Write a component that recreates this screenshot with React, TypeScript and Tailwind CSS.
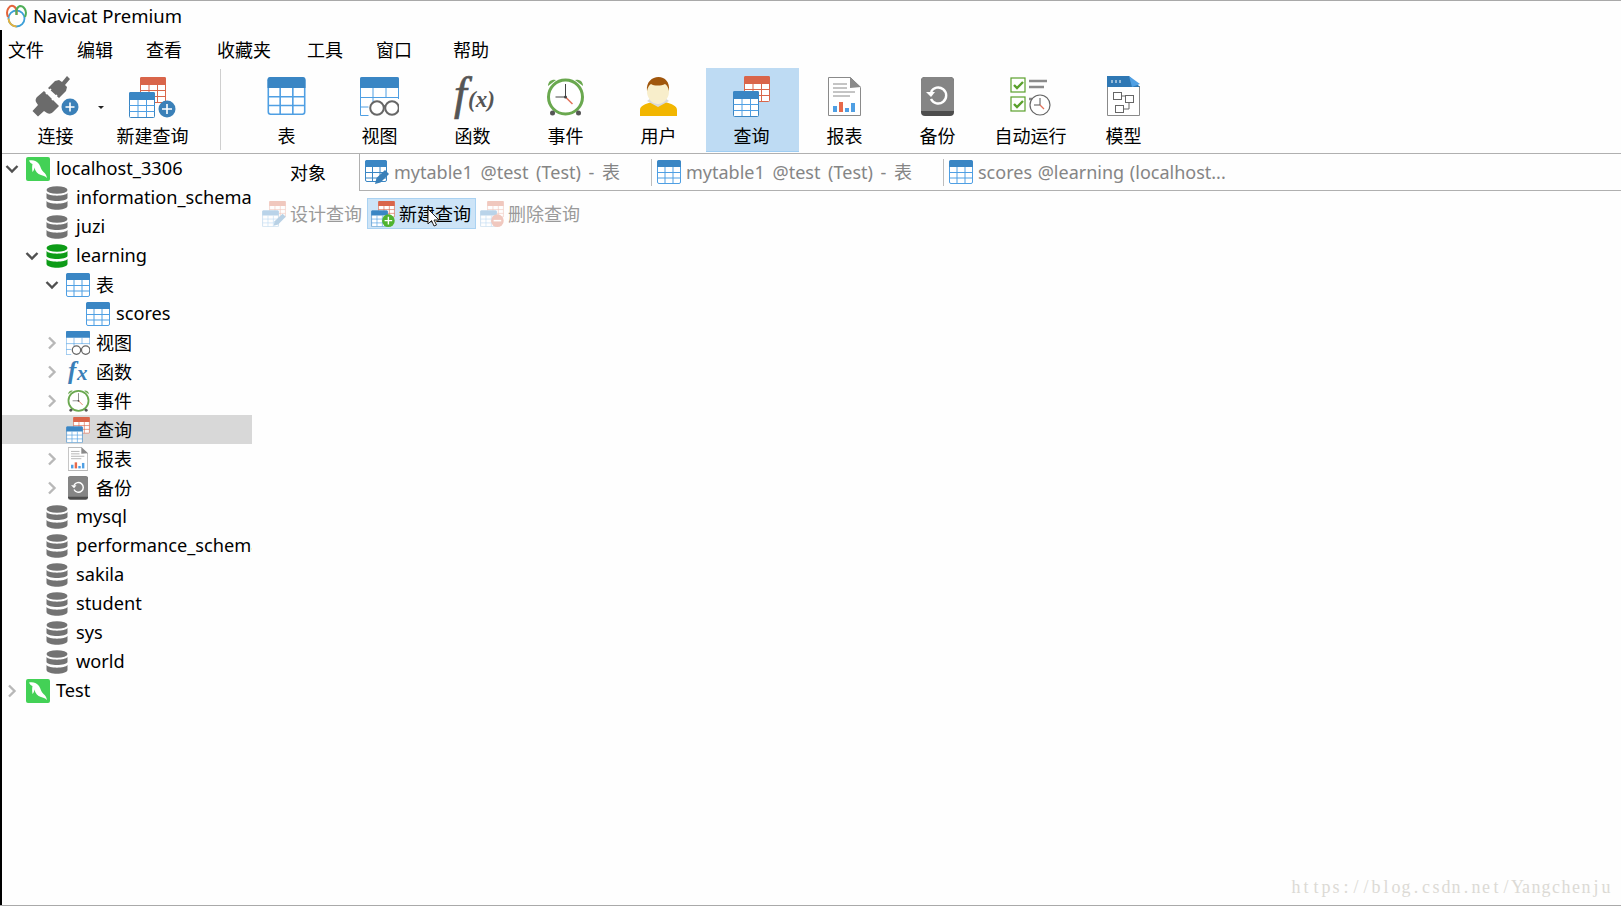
import React from 'react';

const cjk = "font-['Noto_Sans_CJK_SC','Noto_Sans',sans-serif]";
const latin = "font-['Noto_Sans','Noto_Sans_CJK_SC',sans-serif]";

function TableIcon({ w = 24, h = 24, head = '#3a86c4', line = '#4f9fe3' }: { w?: number; h?: number; head?: string; line?: string }) {
  return (
    <svg width={w} height={h} viewBox="0 0 24 24" className="shrink-0">
      <rect x="0.5" y="0.5" width="23" height="23" rx="1.5" fill="#fff" stroke={line} />
      <path d="M0 7V2a2 2 0 0 1 2-2h20a2 2 0 0 1 2 2v5z" fill={head} />
      <path d="M0.5 12.5h23M0.5 18h23M8 7v16.5M16 7v16.5" stroke={line} strokeWidth="1" fill="none" />
    </svg>
  );
}

function QueryTables() {
  return (
    <>
      <g>
        <rect x="11.5" y="0.5" width="25" height="25" rx="1" fill="#fff" stroke="#d9674b" />
        <path d="M11 8V1.5A1.5 1.5 0 0 1 12.5 0h23A1.5 1.5 0 0 1 37 1.5V8z" fill="#d9654a" />
        <path d="M11.5 13.5h25M11.5 19.5h25M20 8v17M28.5 8v17" stroke="#d9674b" fill="none" />
      </g>
      <g>
        <rect x="0.5" y="15.5" width="25" height="25" rx="1" fill="#fff" stroke="#3a86c4" />
        <path d="M0 23v-6.5A1.5 1.5 0 0 1 1.5 15h23a1.5 1.5 0 0 1 1.5 1.5V23z" fill="#3a86c4" />
        <path d="M0.5 28.5h25M0.5 34.5h25M9 23v17M17.5 23v17" stroke="#4f9fe3" fill="none" />
      </g>
    </>
  );
}

function QueryIcon({ w = 37, h = 41, plus, minus, pencil }: { w?: number; h?: number; plus?: boolean; minus?: boolean; pencil?: boolean }) {
  return (
    <svg width={w} height={h} viewBox="0 0 37 41" className="shrink-0">
      <QueryTables />
      {plus && (
        <g>
          <circle cx="27" cy="31" r="10" fill="#4fb32f" />
          <path d="M27 25v12M21 31h12" stroke="#fff" strokeWidth="2.200" />
        </g>
      )}
      {minus && (
        <g>
          <circle cx="27" cy="31" r="10" fill="#d9674b" />
          <path d="M21 31h12" stroke="#fff" strokeWidth="2.400" />
        </g>
      )}
      {pencil && <path d="M18 39l1.500-7L32 20l5 5-12 12z" fill="#3a80b8" />}
    </svg>
  );
}

function NewQueryIcon() {
  return (
    <svg width="47" height="41" viewBox="0 0 47 41" className="shrink-0">
      <QueryTables />
      <circle cx="38" cy="32" r="8.500" fill="#3a80b8" />
      <path d="M38 27v10M33 32h10" stroke="#fff" strokeWidth="1.600" />
    </svg>
  );
}

function PlugIcon() {
  return (
    <svg width="48" height="44" viewBox="0 0 48 44" className="shrink-0">
      <path d="M0.5 37l5.500-6-2-3c-1-2 0-4 1-5l7-6 15 15-6 6c-2 2-4 2-6 1l-3-2-6 5.500z" fill="#6b6b6b" />
      <path d="M16 14l7-7 4-1 3 2 5-6 3 3-5 6 2 2-1 4-7 7z" fill="#6b6b6b" />
      <path d="M14 20l5-5M20 26l5-5" stroke="#fff" strokeWidth="1.600" />
      <circle cx="38" cy="33" r="8.500" fill="#3a80b8" />
      <path d="M38 28.500v9M33.500 33h9" stroke="#fff" strokeWidth="1.600" />
    </svg>
  );
}

function ViewIcon({ w = 39, h = 39 }: { w?: number; h?: number }) {
  return (
    <svg width={w} height={h} viewBox="0 0 39 39" className="shrink-0">
      <path d="M0.5 38.500V1.500a1 1 0 0 1 1-1h36a1 1 0 0 1 1 1V22M0.500 38.500h8" fill="#fff" stroke="#4f9fe3" />
      <path d="M0 11V2a2 2 0 0 1 2-2h35a2 2 0 0 1 2 2v9z" fill="#3a86c4" />
      <path d="M0.5 20.500h38M0.500 30h8M13 11v14M26 11v10" stroke="#4f9fe3" fill="none" />
      <circle cx="17" cy="31" r="6.800" fill="#fff" stroke="#666" strokeWidth="2" />
      <circle cx="32" cy="31" r="6.800" fill="#fff" stroke="#666" strokeWidth="2" />
      <path d="M24 30c1-1 0.500-1 1-1" stroke="#666" strokeWidth="2" fill="none" />
    </svg>
  );
}

function ClockIcon({ size = 39, ring = '#6aa84f' }: { size?: number; ring?: string }) {
  return (
    <svg width={size} height={size} viewBox="0 0 39 39" className="shrink-0">
      <path d="M2 9a6 6 0 0 1 8-6zM37 9a6 6 0 0 0-8-6z" fill={ring} />
      <circle cx="19.500" cy="20" r="17" fill="#fff" stroke={ring} strokeWidth="3" />
      <circle cx="6.500" cy="36" r="2.500" fill="#555" />
      <circle cx="32.500" cy="36" r="2.500" fill="#555" />
      <path d="M19.500 7v13M9.500 20h10" stroke="#444" strokeWidth="1" fill="none" />
      <path d="M19.500 20l7 7" stroke="#e2725b" strokeWidth="1.500" fill="none" />
      <circle cx="19.500" cy="20" r="1.500" fill="#444" />
    </svg>
  );
}

function UserIcon() {
  return (
    <svg width="37" height="39" viewBox="0 0 37 39" className="shrink-0">
      <path d="M0 39v-6c0-4 5-6 12-8l6 3 7-3c7 2 12 4 12 8v6z" fill="#f2b600" />
      <path d="M7 24l4-3 7 6 7-6 4 3-11 6z" fill="#d9d9d9" />
      <ellipse cx="18" cy="14" rx="11" ry="13" fill="#f8eecb" />
      <path d="M7 14C6 5 12 0 18.500 0S30 5 29 14c-1-4-2-6-4-7-4 2-11 2-14 0-2 1-3 3-4 7z" fill="#a0560c" />
    </svg>
  );
}

function ReportIcon({ w = 33, h = 39 }: { w?: number; h?: number }) {
  return (
    <svg width={w} height={h} viewBox="0 0 33 39" className="shrink-0">
      <path d="M0.500 0.500h22l10 10v28h-32z" fill="#fff" stroke="#8a8a8a" />
      <path d="M22 0l11 10-11 1z" fill="#8a8a8a" />
      <path d="M5 7h14M5 11h14M5 15h22M5 19h17" stroke="#8a8a8a" strokeWidth="1" />
      <rect x="5" y="29" width="4" height="6" fill="#4f9fe3" />
      <rect x="11" y="25" width="4" height="10" fill="#e8694a" />
      <rect x="17" y="31" width="4" height="4" fill="#4f9fe3" />
      <rect x="23" y="26" width="4" height="9" fill="#4f9fe3" />
    </svg>
  );
}

function BackupIcon({ w = 33, h = 39 }: { w?: number; h?: number }) {
  return (
    <svg width={w} height={h} viewBox="0 0 33 39" className="shrink-0">
      <rect width="33" height="39" rx="4" fill="#4d4d4d" />
      <path d="M0 4a4 4 0 0 1 4-4h25a4 4 0 0 1 4 4v30H0z" fill="#858585" />
      <path d="M10 15a8 8 0 1 1 0 7" fill="none" stroke="#fff" strokeWidth="2.400" />
      <path d="M5 15h9l-4 5z" fill="#fff" />
    </svg>
  );
}

function AutoRunIcon() {
  return (
    <svg width="41" height="39" viewBox="0 0 41 39" className="shrink-0">
      <rect x="1" y="1" width="14" height="14" fill="#fff" stroke="#5aa02c" strokeWidth="1.200" />
      <rect x="1" y="20" width="14" height="14" fill="#fff" stroke="#5aa02c" strokeWidth="1.200" />
      <path d="M4 8l3 3 6-6M4 27l3 3 6-6" stroke="#5aa02c" strokeWidth="2.400" fill="none" />
      <path d="M19 4h18M19 10h15M19 22h3" stroke="#8a8a8a" strokeWidth="2.400" />
      <circle cx="30" cy="28" r="10" fill="#fff" stroke="#666" strokeWidth="1.200" />
      <path d="M30 21v7M24 28h6" stroke="#555" fill="none" />
      <path d="M30 28l4 4" stroke="#e2725b" strokeWidth="1.200" />
    </svg>
  );
}

function ModelIcon() {
  return (
    <svg width="33" height="40" viewBox="0 0 33 40" className="shrink-0">
      <path d="M0.500 10v29.500h32V10" fill="#fff" stroke="#8a8a8a" />
      <path d="M0 11V0h22l11 11z" fill="#2f78b4" />
      <path d="M22 0l11 8-8 3z" fill="#4f9fe3" />
      <path d="M5 4v3M9 4v3M13 4v3" stroke="#fff" />
      <g fill="#fff" stroke="#666" strokeWidth="1">
        <rect x="6.500" y="16.500" width="8" height="7" />
        <rect x="18.500" y="19.500" width="8" height="7" />
        <rect x="8.500" y="29.500" width="8" height="7" />
      </g>
      <path d="M14.500 20h4M22 26.500V33h-5.500" stroke="#666" fill="none" />
    </svg>
  );
}

function FxToolbar() {
  return (
    <svg width="56" height="48" viewBox="0 0 56 48" className="shrink-0 overflow-visible">
      <text x="9" y="37" fontFamily="Liberation Serif" fontStyle="italic" fontSize="46" stroke="#555" strokeWidth="0.700" fill="#555">f</text>
      <text x="23" y="35" fontFamily="Liberation Serif" fontStyle="italic" fontWeight="700" fontSize="23" fill="#555">(x)</text>
    </svg>
  );
}

function FxTree() {
  return (
    <svg width="26" height="26" viewBox="0 0 26 26" className="shrink-0 overflow-visible">
      <text x="3" y="20" fontFamily="Liberation Serif" fontStyle="italic" fontWeight="700" fontSize="25" fill="#3a7fb8">f</text>
      <text x="12" y="21" fontFamily="Liberation Serif" fontStyle="italic" fontWeight="700" fontSize="21" fill="#3a7fb8">x</text>
    </svg>
  );
}

function NavicatLogo() {
  return (
    <svg width="23" height="24" viewBox="0 0 23 24" className="shrink-0">
      <circle cx="11.500" cy="14.500" r="8" fill="none" stroke="#3c9fd8" strokeWidth="1.800" />
      <path d="M3.500 14.500a8 8 0 0 0 8 8" fill="none" stroke="#e8b23a" strokeWidth="1.800" />
      <path d="M3 13C0 6 5 1 8 2c3 1 4 5 3.500 9" fill="none" stroke="#e4643a" strokeWidth="2" />
      <path d="M20 13c3-7-2-11-5-11-3 1-4 5-3.500 9" fill="none" stroke="#4fae58" strokeWidth="2" />
    </svg>
  );
}

function Dolphin() {
  return (
    <svg width="24" height="24" viewBox="0 0 24 24" className="shrink-0">
      <rect width="24" height="24" rx="2" fill="#43d156" />
      <path d="M3 3.500C7 2.500 11 4 13 7c2 3 2 6 4.500 8 1.500 1 3 3 3.500 6-2-2-4-2.500-6-3-3.500-1-6-4-6.500-7.500-.3 2-1 3.500-2 4.500C6 12 6 9 6.500 7 5 6.500 3.500 5 3 3.500z" fill="#fff" />
    </svg>
  );
}

function DbIcon({ color = '#737373' }: { color?: string }) {
  return (
    <svg width="24" height="24" viewBox="0 0 24 24" className="shrink-0">
      <ellipse cx="11" cy="4" rx="10.500" ry="3.800" fill={color} />
      <path d="M0.500 7c2 3.500 19 3.500 21 0v5c-1 4-20 4-21 0z" fill={color} />
      <path d="M0.500 15c2 3.500 19 3.500 21 0v5c-1 5-20 5-21 0z" fill={color} />
    </svg>
  );
}

function Chevron({ open }: { open: boolean }) {
  if (open) {
    return (
      <svg width="14" height="10" viewBox="0 0 14 10">
        <path d="M1.500 2l5.500 5.500L12.500 2" fill="none" stroke="#505050" strokeWidth="2.400" />
      </svg>
    );
  }
  return (
    <svg width="10" height="14" viewBox="0 0 10 14">
      <path d="M2 1.500L7.500 7 2 12.500" fill="none" stroke="#b8b8b8" strokeWidth="2.400" />
    </svg>
  );
}

function QueryTabIcon() {
  return (
    <svg width="24" height="24" viewBox="0 0 24 24" className="shrink-0">
      <rect x="0.5" y="0.5" width="21" height="21" rx="1.500" fill="#fff" stroke="#3a86c4" />
      <path d="M0 7V2a2 2 0 0 1 2-2h18a2 2 0 0 1 2 2v5z" fill="#3a86c4" />
      <path d="M0.500 12.500h21M0.500 18h21M7.500 7v14M15 7v14" stroke="#3a86c4" fill="none" />
      <path d="M10 24l1.500-6L20 10l4 4-8.500 8.500z" fill="#3a80b8" />
    </svg>
  );
}

type TreeRow = { level: number; label: string; icon: React.ReactNode; open?: boolean; selected?: boolean; zh?: boolean };

const treeRows: TreeRow[] = [
  { level: 0, label: 'localhost_3306', icon: <Dolphin />, open: true },
  { level: 1, label: 'information_schema', icon: <DbIcon /> },
  { level: 1, label: 'juzi', icon: <DbIcon /> },
  { level: 1, label: 'learning', icon: <DbIcon color="#0d9c17" />, open: true },
  { level: 2, label: '表', icon: <TableIcon />, open: true, zh: true },
  { level: 3, label: 'scores', icon: <TableIcon /> },
  { level: 2, label: '视图', icon: <ViewIcon w={24} h={24} />, open: false, zh: true },
  { level: 2, label: '函数', icon: <FxTree />, open: false, zh: true },
  { level: 2, label: '事件', icon: <ClockIcon size={23} />, open: false, zh: true },
  { level: 2, label: '查询', icon: <QueryIcon w={24} h={26} />, selected: true, zh: true },
  { level: 2, label: '报表', icon: <ReportIcon w={20} h={24} />, open: false, zh: true },
  { level: 2, label: '备份', icon: <BackupIcon w={20} h={24} />, open: false, zh: true },
  { level: 1, label: 'mysql', icon: <DbIcon /> },
  { level: 1, label: 'performance_schema', icon: <DbIcon /> },
  { level: 1, label: 'sakila', icon: <DbIcon /> },
  { level: 1, label: 'student', icon: <DbIcon /> },
  { level: 1, label: 'sys', icon: <DbIcon /> },
  { level: 1, label: 'world', icon: <DbIcon /> },
  { level: 0, label: 'Test', icon: <Dolphin />, open: false },
];

const menus = [
  { label: '文件', width: 'w-[69px]' },
  { label: '编辑', width: 'w-[69px]' },
  { label: '查看', width: 'w-[71px]' },
  { label: '收藏夹', width: 'w-[90px]' },
  { label: '工具', width: 'w-[69px]' },
  { label: '窗口', width: 'w-[77px]' },
  { label: '帮助', width: 'w-[69px]' },
];

const tools: { label: string; icon: React.ReactNode; active?: boolean }[] = [
  { label: '表', icon: <TableIcon w={39} h={38} /> },
  { label: '视图', icon: <ViewIcon /> },
  { label: '函数', icon: <FxToolbar /> },
  { label: '事件', icon: <ClockIcon /> },
  { label: '用户', icon: <UserIcon /> },
  { label: '查询', icon: <QueryIcon />, active: true },
  { label: '报表', icon: <ReportIcon /> },
  { label: '备份', icon: <BackupIcon /> },
  { label: '自动运行', icon: <AutoRunIcon /> },
  { label: '模型', icon: <ModelIcon /> },
];

function ToolButton({ label, icon, active, width = 'w-[93px]', inset = 'pr-[2px]' }: { label: string; icon: React.ReactNode; active?: boolean; width?: string; inset?: string }) {
  return (
    <div className={`${width} ${inset} h-[84px] flex flex-col items-center shrink-0 ${active ? 'bg-[#bedbf3] border-b border-[#9fcdf2]' : ''}`}>
      <div className="mt-[6px] h-[44px] flex items-center justify-center">{icon}</div>
      <div className={`${cjk} mt-[3px] h-[28px] leading-[28px] text-[18px] text-black`}>{label}</div>
    </div>
  );
}

function Tab({ label, icon, last }: { label: string; icon: React.ReactNode; last?: boolean }) {
  return (
    <div className={`h-full flex items-center gap-[5px] pl-[5px] shrink-0 ${last ? '[word-spacing:1px]' : 'w-[291px] [word-spacing:3px]'}`}>
      {icon}
      <span className={`${latin} text-[18px] text-[#858585] whitespace-nowrap`}>{label}</span>
    </div>
  );
}

function ActionButton({ label, icon, hover, children }: { label: string; icon: React.ReactNode; hover?: boolean; children?: React.ReactNode }) {
  return (
    <div className={`relative w-[109px] h-[31px] flex items-center gap-[4px] pl-[3px] border ${hover ? 'bg-[#cde4f7] border-[#aad2f2] text-black' : 'border-transparent text-[#9a9a9a]'}`}>
      {icon}
      <span className={`${cjk} text-[18px] whitespace-nowrap`}>{label}</span>
      {children}
    </div>
  );
}

const watermark = 'https://blog.csdn.net/Yangchenju';

export default function App() {
  return (
    <div className="w-[1621px] h-[906px] flex flex-col overflow-hidden bg-[#fefefe] border-t border-b border-[#a9a9a9]">
      <div className="h-[29px] shrink-0 flex items-center pl-[5px] gap-[5px]">
        <NavicatLogo />
        <span className={`${latin} text-[18.500px] text-black`}>Navicat Premium</span>
      </div>

      <div className="flex-1 min-h-0 flex flex-col border-l-2 border-black">
        <div className="h-[38px] shrink-0 flex items-center pl-[6px] pt-[1px]">
          {menus.map((m) => (
            <div key={m.label} className={`${m.width} ${cjk} text-[18px] text-black`}>{m.label}</div>
          ))}
        </div>

        <div className="h-[85px] shrink-0 flex">
          <div className="relative w-[105px] shrink-0">
            <ToolButton label="连接" icon={<PlugIcon />} width="w-[105px]" inset="pl-[2px]" />
            <div className="absolute left-[96px] top-[38px] w-0 h-0 border-x-[3px] border-x-transparent border-t-[3px] border-t-[#222]" />
          </div>
          <ToolButton label="新建查询" icon={<div className="pt-[3px]"><NewQueryIcon /></div>} />
          <div className="ml-[20px] mr-[20px] mt-[1px] h-[81px] w-px bg-[#cfcfcf] shrink-0" />
          {tools.map((t) => (
            <ToolButton key={t.label} label={t.label} icon={t.icon} active={t.active} />
          ))}
        </div>

        <div className="flex-1 min-h-0 flex border-t border-[#b0b0b0]">
          <div className="w-[250px] shrink-0 overflow-hidden">
            {treeRows.map((r) => (
              <div
                key={r.label}
                className={`h-[29px] flex items-center ${r.selected ? 'bg-[#d8d8d8]' : ''}`}
              >
                <div className="shrink-0" style={{ width: r.level * 20 }} />
                <div className="w-[20px] shrink-0 flex items-center justify-center">
                  {r.open !== undefined && <Chevron open={r.open} />}
                </div>
                <div className="ml-[4px] w-[24px] h-[24px] shrink-0 flex items-center justify-center">{r.icon}</div>
                <span className={`${r.zh ? `${cjk} text-[18px] ml-[6px] pb-[1px]` : `${latin} text-[18.200px] ml-[6px]`} text-black whitespace-nowrap`}>{r.label}</span>
              </div>
            ))}
          </div>

          <div className="flex-1 min-w-0 flex flex-col">
            <div className="h-[37px] shrink-0 flex">
              <div className={`w-[107px] shrink-0 pl-[38px] flex items-center ${cjk} text-[18px] text-black`}>对象</div>
              <div className="flex-1 flex items-center border-l border-b border-[#b0b0b0]">
                <Tab label="mytable1 @test (Test) - 表" icon={<QueryTabIcon />} />
                <div className="w-px h-[27px] bg-[#bdbdbd]" />
                <Tab label="mytable1 @test (Test) - 表" icon={<TableIcon />} />
                <div className="w-px h-[27px] bg-[#bdbdbd]" />
                <Tab label="scores @learning (localhost..." icon={<TableIcon />} last />
              </div>
            </div>
            <div className="mt-[7px] ml-[6px] flex">
              <ActionButton label="设计查询" icon={<div className="opacity-35"><QueryIcon w={24} h={26} pencil /></div>} />
              <ActionButton label="新建查询" hover icon={<QueryIcon w={24} h={26} plus />}>
                <svg width="13" height="20" viewBox="0 0 13 20" className="absolute left-[59px] top-[9px]">
                  <path d="M1 1v15l3.500-3.500L7 18l2.500-1-2.500-5h5z" fill="#fff" stroke="#222" strokeWidth="1" />
                </svg>
              </ActionButton>
              <ActionButton label="删除查询" icon={<div className="opacity-35"><QueryIcon w={24} h={26} minus /></div>} />
            </div>
            <div className="flex-1 relative">
              <div className="absolute right-[10px] bottom-[8px] font-['Liberation_Serif',serif] text-[18px] leading-[20px] text-[#dcdad5] whitespace-nowrap flex">
                {watermark.split('').map((c, i) => (
                  <span key={i} className="w-[10px] text-center">{c}</span>
                ))}
              </div>
            </div>
          </div>
        </div>
      </div>
    </div>
  );
}
